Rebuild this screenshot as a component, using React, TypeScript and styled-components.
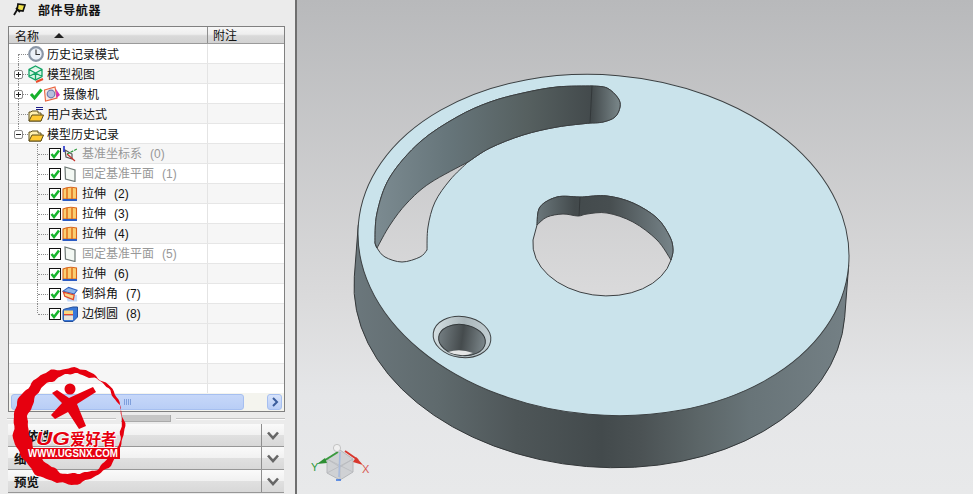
import styled, { createGlobalStyle } from "styled-components";

const GlobalStyle = createGlobalStyle`
  html, body, #root {
    margin: 0;
    height: 100%;
  }
  body {
    overflow: hidden;
    font-family: "Noto Sans CJK SC", "Liberation Sans", sans-serif;
    font-size: 12px;
    color: #111;
  }
`;

const Page = styled.div`
  position: relative;
  display: flex;
  width: 973px;
  height: 494px;
  overflow: hidden;
  background: #ebebeb;
`;

const Sidebar = styled.div`
  flex: none;
  width: 297px;
  box-sizing: border-box;
  padding-left: 8px;
  padding-right: 10px;
  display: flex;
  flex-direction: column;
  border-right: 2px solid #6f6f6f;
  background: #ebebeb;
`;

const TitleBar = styled.div`
  flex: none;
  height: 26px;
  display: flex;
  align-items: flex-start;
  padding: 3px 0 0 5px;
  box-sizing: border-box;
  gap: 12px;
`;

const TitleText = styled.div`
  font-weight: 700;
  font-size: 12px;
  line-height: 14px;
  letter-spacing: 0.6px;
`;

const TreeBox = styled.div`
  flex: none;
  height: 386px;
  box-sizing: border-box;
  border: 1px solid #808080;
  background: #fff;
  display: flex;
  flex-direction: column;
`;

const Header = styled.div`
  flex: none;
  height: 17px;
  display: flex;
  box-sizing: border-box;
  border-bottom: 1px solid #9a9a9a;
  background: linear-gradient(#f7f7f7 0%, #eeeeee 45%, #d9d9d9 55%, #d2d2d2 100%);
`;

const HeadName = styled.div`
  width: 199px;
  box-sizing: border-box;
  padding-left: 6px;
  display: flex;
  align-items: center;
  gap: 15px;
  border-right: 1px solid #8f8f8f;
  line-height: 15px;
`;

const HeadNote = styled.div`
  flex: 1;
  padding-left: 5px;
  line-height: 15px;
`;

const SortArrow = styled.span`
  width: 0;
  height: 0;
  border-left: 5px solid transparent;
  border-right: 5px solid transparent;
  border-bottom: 5px solid #222;
`;

const Rows = styled.div`
  flex: 1;
  min-height: 0;
  overflow: hidden;
`;

const Row = styled.div<{ $shaded: boolean }>`
  height: 20px;
  box-sizing: border-box;
  display: flex;
  border-bottom: 1px solid #e6e6e6;
  background: ${(p) => (p.$shaded ? "#f6f6f6" : "#fff")};
`;

const NameCell = styled.div`
  width: 199px;
  box-sizing: border-box;
  display: flex;
  align-items: center;
  border-right: 1px solid #e4e4e4;
`;

const NoteCell = styled.div`
  flex: 1;
`;

const Lane = styled.span<{ $width: number; $rail: number; $span: "full" | "top" | "bottom" }>`
  position: relative;
  flex: none;
  align-self: stretch;
  width: ${(p) => p.$width}px;

  &::before {
    content: "";
    position: absolute;
    left: ${(p) => p.$rail}px;
    top: ${(p) => (p.$span === "bottom" ? "10px" : "0")};
    bottom: ${(p) => (p.$span === "top" ? "10px" : "-1px")};
    border-left: 1px dotted #8c8c8c;
  }

  &::after {
    content: "";
    position: absolute;
    left: ${(p) => p.$rail + 1}px;
    right: 0;
    top: 10px;
    border-top: 1px dotted #8c8c8c;
  }
`;

const Expander = styled.span`
  position: absolute;
  z-index: 1;
  left: 5px;
  top: 6px;
  width: 7px;
  height: 7px;
  border: 1px solid #8a8a8a;
  border-radius: 2px;
  background: #fff;
  display: flex;
  align-items: center;
  justify-content: center;
`;

const ExpanderMark = styled.span<{ $open: boolean }>`
  position: relative;
  width: 5px;
  height: 1px;
  background: #222;

  &::after {
    content: "";
    display: ${(p) => (p.$open ? "none" : "block")};
    position: absolute;
    left: 2px;
    top: -2px;
    width: 1px;
    height: 5px;
    background: #222;
  }
`;

const CheckBox = styled.span`
  flex: none;
  width: 12px;
  height: 12px;
  margin-left: 1px;
  margin-right: 1px;
  box-sizing: border-box;
  border: 1px solid #111;
  background: #fff;
  display: flex;
`;

const Label = styled.span<{ $muted: boolean; $child: boolean }>`
  margin-left: ${(p) => (p.$child ? 4 : 3)}px;
  color: ${(p) => (p.$muted ? "#989898" : "#111")};
  white-space: nowrap;
  line-height: 16px;
`;

const Order = styled.span`
  margin-left: 8px;
  font-family: "Liberation Sans", sans-serif;
  font-size: 12px;
`;

const Scrollbar = styled.div`
  flex: none;
  height: 18px;
  box-sizing: border-box;
  padding: 1px 2px;
  display: flex;
  background: #f4f4ee;
`;

const ScrollThumb = styled.div`
  width: 233px;
  box-sizing: border-box;
  border: 1px solid #a6bff0;
  border-radius: 3px;
  background: linear-gradient(#c6d7f9, #b9cef6);
  display: flex;
  align-items: center;
  justify-content: center;
  gap: 1px;
`;

const GripBar = styled.span`
  width: 1px;
  height: 6px;
  background: #7f9fdc;
`;

const ScrollButton = styled.div`
  width: 15px;
  margin-left: auto;
  box-sizing: border-box;
  border: 1px solid #a6bff0;
  border-radius: 3px;
  background: linear-gradient(#d7e3fb, #b9cef6);
  display: flex;
  align-items: center;
  justify-content: center;
`;

const Splitter = styled.div`
  flex: none;
  height: 12px;
  margin-left: -1px;
  display: flex;
  align-items: center;
  gap: 5px;
`;

const SplitLine = styled.span<{ $width: number }>`
  width: ${(p) => p.$width}px;
  height: 1px;
  background: #c4c4c4;
  box-shadow: 0 1px 0 #fafafa;
`;

const SplitHandle = styled.span`
  width: 50px;
  height: 6px;
  background: #c6c6c6;
  border: 0 solid #aaa;
  border-width: 0 1px 1px 0;
`;

const Panel = styled.div`
  flex: none;
  width: 276px;
  height: 23px;
  box-sizing: border-box;
  display: flex;
  border-bottom: 1px solid #979797;
  background: linear-gradient(#fafafa 0%, #f1f1f1 50%, #e0e0e0 52%, #d8d8d8 100%);
`;

const PanelTitle = styled.div`
  flex: 1;
  padding-left: 6px;
  font-weight: 700;
  font-size: 12.5px;
  line-height: 24px;
`;

const PanelButton = styled.div`
  width: 22px;
  border-left: 1px solid #8e8e8e;
  display: flex;
  align-items: center;
  justify-content: center;
`;

const Viewport = styled.div`
  flex: 1;
  min-width: 0;
  background: linear-gradient(#b8b9bb 0%, #dadadb 60%, #e5e6e8 80%, #e8e9ea 100%);
`;

const Model = styled.svg`
  display: block;
  width: 100%;
  height: 100%;
`;

const Stamp = styled.svg`
  position: absolute;
  left: 0;
  top: 360px;
  pointer-events: none;
`;

type Pt = [number, number];

// catmull-rom through the traced points
function curve(pts: Pt[], move = true) {
  let d = move ? `M${pts[0][0]} ${pts[0][1]}` : "";
  for (let i = 0; i < pts.length - 1; i++) {
    const a = pts[Math.max(i - 1, 0)];
    const b = pts[i];
    const c = pts[i + 1];
    const e = pts[Math.min(i + 2, pts.length - 1)];
    const c1 = [b[0] + (c[0] - a[0]) / 6, b[1] + (c[1] - a[1]) / 6];
    const c2 = [c[0] - (e[0] - b[0]) / 6, c[1] - (e[1] - b[1]) / 6];
    d += `C${c1[0].toFixed(1)} ${c1[1].toFixed(1)} ${c2[0].toFixed(1)} ${c2[1].toFixed(1)} ${c[0]} ${c[1]}`;
  }
  return d;
}

const slotOuter: Pt[] = [[375, 243], [377, 213], [390, 177], [420, 142], [457, 117], [490, 102], [523, 93], [557, 87], [592, 86]];
const slotCap: Pt[] = [[592, 86], [607, 88], [618, 98], [620, 107], [615, 117], [603, 122], [590, 123]];
const slotInnerA: Pt[] = [[590, 123], [557, 127], [523, 135], [490, 148], [468, 162]];
const slotInnerB: Pt[] = [[468, 162], [450, 180], [435, 202], [428, 227], [427, 250]];
const slotEnd: Pt[] = [[427, 250], [420, 257], [402, 262], [385, 257], [377, 248], [375, 243]];
const slotLower: Pt[] = [[468, 162], [430, 183], [407, 203], [390, 225], [377, 248]];

const slotHole = curve(slotOuter) + curve(slotCap, false) + curve(slotInnerA, false) + curve(slotInnerB, false) + curve(slotEnd, false) + "Z";
const slotWall = curve(slotOuter) + curve(slotCap, false) + curve(slotInnerA, false) + curve(slotLower, false) + "L375 243Z";

const boreTopA: Pt[] = [[537, 225], [540, 207], [557, 197], [578, 197], [583, 197]];
const boreTopB: Pt[] = [[583, 197], [607, 196], [633, 203], [657, 218], [670, 237], [673, 250], [671, 260]];
const boreLower: Pt[] = [[671, 260], [657, 240], [633, 222], [607, 213], [587, 214], [578, 216], [563, 214], [547, 217], [537, 225]];

const boreHole = curve(boreTopA) + curve(boreTopB, false) + "A70 49 5 0 1 533 240L537 225Z";
const boreWall = curve(boreTopA) + curve(boreTopB, false) + curve(boreLower, false) + "Z";

function ragged(cx: number, cy: number, rx: number, ry: number, amp: number, seed: number) {
  const pts: string[] = [];
  for (let i = 0; i < 120; i++) {
    const t = (i / 120) * Math.PI * 2;
    const n = Math.sin(t * 9 + seed) * 0.6 + Math.sin(t * 17 + seed * 2) * 0.5 + Math.sin(t * 31 + seed * 3) * 0.3;
    const k = 1 + (n * amp) / rx;
    pts.push(`${(cx + Math.cos(t) * rx * k).toFixed(1)} ${(cy + Math.sin(t) * ry * k).toFixed(1)}`);
  }
  return `M${pts.join("L")}Z`;
}

function PinIcon() {
  return (
    <svg width="13" height="13" viewBox="0 0 13 13">
      <path d="M5 1 L12 2 L10 8 L4 7Z" fill="#efe04a" stroke="#111" strokeWidth="1.6" />
      <path d="M4 7 L1 12 M3 5 L7 9" stroke="#111" strokeWidth="1.8" />
    </svg>
  );
}

function ClockIcon() {
  return (
    <svg width="16" height="16" viewBox="0 0 16 16">
      <circle cx="8" cy="8" r="6.8" fill="#eaf0f8" stroke="#8a96a6" strokeWidth="2.2" />
      <path d="M8 3.5V8.5H12" fill="none" stroke="#333" strokeWidth="1.1" />
    </svg>
  );
}

function ViewIcon() {
  return (
    <svg width="16" height="18" viewBox="0 0 16 18">
      <path d="M7.5 1 L14 4.5 V11.5 L7.5 15 L1 11.5 V4.5Z M1 4.5 L7.5 8 L14 4.5 M7.5 8V15 M1 11.5 L14 4.5 M1 4.5 L14 11.5" fill="#d8f5e4" stroke="#12a364" strokeWidth="1.3" />
      <path d="M8 17 L15 14" stroke="#ea4b2a" strokeWidth="2" />
    </svg>
  );
}

function TickIcon() {
  return (
    <svg width="16" height="16" viewBox="0 0 16 16">
      <path d="M3 8 L6.5 12 L13.5 3.5" fill="none" stroke="#17b12c" strokeWidth="3" />
    </svg>
  );
}

function CameraIcon() {
  return (
    <svg width="16" height="16" viewBox="0 0 16 16">
      <path d="M0.5 4 L11 1 L13 12 L1.5 15Z" fill="#fbe9e4" stroke="#e8623c" strokeWidth="1.1" />
      <circle cx="7" cy="8" r="3.8" fill="#b6bfdc" stroke="#6d7bb0" strokeWidth="1.2" />
      <path d="M12 3 L16 9 L12.5 12Z" fill="#d92fb0" />
    </svg>
  );
}

function FolderIcon({ lines }: { lines?: boolean }) {
  return (
    <svg width="16" height="16" viewBox="0 0 16 16">
      {lines && <path d="M8 1.5H15 M8 3.5H15" stroke="#1c1c86" strokeWidth="1" />}
      <path d="M1 15 V6 H3 L4 5 H10 V7 H13 V15Z" fill="#fff0b0" stroke="#5c4c18" strokeWidth="1" />
      <path d="M1 15 L4 9 H15.5 L13 15Z" fill="#ffc933" stroke="#5c4c18" strokeWidth="1" />
    </svg>
  );
}

function CsysIcon() {
  return (
    <svg width="16" height="16" viewBox="0 0 16 16">
      <path d="M3 4 L10 8 V13 L4 11Z" fill="#eef0ef" stroke="#555" strokeWidth="1.2" />
      <path d="M2 6V0" stroke="#2030c8" strokeWidth="1.6" />
      <path d="M5 8 L15 3" stroke="#2a9a3a" strokeWidth="1.2" strokeDasharray="3 1" />
      <path d="M5 8 L13 15" stroke="#c8322a" strokeWidth="1.2" />
    </svg>
  );
}

function PlaneIcon() {
  return (
    <svg width="16" height="16" viewBox="0 0 16 16">
      <path d="M3 1 L13 4 V15.5 L3.5 13Z" fill="#f3f8f3" stroke="#6e7874" strokeWidth="1.2" />
    </svg>
  );
}

function ExtrudeIcon() {
  return (
    <svg width="16" height="16" viewBox="0 0 16 16">
      <path d="M1 3 Q7 0 14.5 2 V13 H1Z" fill="#fbcf72" stroke="#d9651c" strokeWidth="1.1" />
      <path d="M5 2V13 M10 2V13" stroke="#e0701c" strokeWidth="1.5" />
      <path d="M0.5 14 H15" stroke="#2c5cc4" strokeWidth="2" />
    </svg>
  );
}

function ChamferIcon() {
  return (
    <svg width="16" height="16" viewBox="0 0 17 16">
      <path d="M3 7 L16 9 V16 H6Z" fill="#c4daf8" />
      <path d="M1 5 L7 1 L16 4 L13 8Z" fill="#8fb7ea" stroke="#2e60c0" strokeWidth="1.1" />
      <path d="M1.5 6 L13 9 L12 14 L3 10.5Z" fill="#fbd78a" stroke="#e0482a" strokeWidth="1.3" />
    </svg>
  );
}

function BlendIcon() {
  return (
    <svg width="16" height="16" viewBox="0 0 16 16">
      <path d="M1 5 Q1 3 3 3 L11 1 H15.5 V11 L11 15.5 H3 Q1 15.5 1 13Z" fill="#3a78d8" stroke="#24509c" strokeWidth="1" />
      <path d="M2 4.5 H11 V8 H2Z" fill="#fbd77e" />
      <path d="M2 8 H11 V9.5 H2Z" fill="#e6482e" />
      <path d="M2 9.5 H11 V14 H2Z" fill="#e8e4d8" />
    </svg>
  );
}

type NodeRow = {
  label: string;
  icon: React.ReactNode;
  order?: number;
  muted?: boolean;
  child?: boolean;
  expander?: "plus" | "minus";
  tick?: boolean;
  span: "full" | "top" | "bottom";
};

const nodes: NodeRow[] = [
  { label: "历史记录模式", icon: <ClockIcon />, span: "bottom" },
  { label: "模型视图", icon: <ViewIcon />, expander: "plus", span: "full" },
  { label: "摄像机", icon: <CameraIcon />, expander: "plus", tick: true, span: "full" },
  { label: "用户表达式", icon: <FolderIcon lines />, span: "full" },
  { label: "模型历史记录", icon: <FolderIcon />, expander: "minus", span: "top" },
  { label: "基准坐标系", icon: <CsysIcon />, order: 0, muted: true, child: true, span: "full" },
  { label: "固定基准平面", icon: <PlaneIcon />, order: 1, muted: true, child: true, span: "full" },
  { label: "拉伸", icon: <ExtrudeIcon />, order: 2, child: true, span: "full" },
  { label: "拉伸", icon: <ExtrudeIcon />, order: 3, child: true, span: "full" },
  { label: "拉伸", icon: <ExtrudeIcon />, order: 4, child: true, span: "full" },
  { label: "固定基准平面", icon: <PlaneIcon />, order: 5, muted: true, child: true, span: "full" },
  { label: "拉伸", icon: <ExtrudeIcon />, order: 6, child: true, span: "full" },
  { label: "倒斜角", icon: <ChamferIcon />, order: 7, child: true, span: "full" },
  { label: "边倒圆", icon: <BlendIcon />, order: 8, child: true, span: "top" },
];

const blankRows = [0, 1, 2, 3];

function Chevron() {
  return (
    <svg width="12" height="9" viewBox="0 0 12 9">
      <path d="M1 1.5 L6 7 L11 1.5" fill="none" stroke="#666" strokeWidth="2.6" />
    </svg>
  );
}

function PartModel() {
  return (
    <Model viewBox="297 0 676 494">
      <defs>
        <linearGradient id="bg" gradientUnits="userSpaceOnUse" x1="0" y1="0" x2="0" y2="494">
          <stop offset="0" stopColor="#b8b9bb" />
          <stop offset="0.6" stopColor="#dadadb" />
          <stop offset="0.8" stopColor="#e5e6e8" />
          <stop offset="1" stopColor="#e8e9ea" />
        </linearGradient>
        <linearGradient id="side" gradientUnits="userSpaceOnUse" x1="354" y1="0" x2="849" y2="0">
          <stop offset="0" stopColor="#6b777c" />
          <stop offset="0.17" stopColor="#5f6a6d" />
          <stop offset="0.33" stopColor="#4e5658" />
          <stop offset="0.5" stopColor="#434a4c" />
          <stop offset="0.58" stopColor="#4b5254" />
          <stop offset="0.7" stopColor="#5c6668" />
          <stop offset="0.8" stopColor="#687478" />
          <stop offset="1" stopColor="#748085" />
        </linearGradient>
        <linearGradient id="slot" gradientUnits="userSpaceOnUse" x1="375" y1="0" x2="620" y2="0">
          <stop offset="0" stopColor="#7c8b91" />
          <stop offset="0.3" stopColor="#66757a" />
          <stop offset="0.62" stopColor="#566060" />
          <stop offset="0.885" stopColor="#434a4c" />
          <stop offset="1" stopColor="#7a878a" />
        </linearGradient>
        <linearGradient id="bore" gradientUnits="userSpaceOnUse" x1="533" y1="0" x2="673" y2="0">
          <stop offset="0" stopColor="#6f7c80" />
          <stop offset="0.3" stopColor="#434a4c" />
          <stop offset="0.55" stopColor="#474e50" />
          <stop offset="1" stopColor="#778489" />
        </linearGradient>
        <linearGradient id="cone" gradientUnits="userSpaceOnUse" x1="433" y1="0" x2="491" y2="0">
          <stop offset="0" stopColor="#d4dfe2" />
          <stop offset="0.5" stopColor="#aab6ba" />
          <stop offset="1" stopColor="#c4d0d4" />
        </linearGradient>
        <linearGradient id="counter" gradientUnits="userSpaceOnUse" x1="438" y1="0" x2="486" y2="0">
          <stop offset="0" stopColor="#747e82" />
          <stop offset="0.5" stopColor="#454b4d" />
          <stop offset="1" stopColor="#7e898d" />
        </linearGradient>
      </defs>

      <path
        d="M358.3 224.8 L354.3 276.8 A246 170 5 0 0 844.7 317.2 L848.7 265.2Z"
        fill="url(#side)"
        stroke="#34383a"
        strokeWidth="1"
      />
      <ellipse cx="603.5" cy="245" rx="246" ry="170" transform="rotate(5 603.5 245)" fill="#cae3eb" stroke="#3c4042" strokeWidth="1" />

      <path d={slotHole} fill="url(#bg)" stroke="#3c4042" strokeWidth="1" />
      <path d={slotWall} fill="url(#slot)" stroke="#3c4042" strokeWidth="1" />
      <path d="M592 86 L590 123" stroke="#33383a" strokeWidth="1" />

      <path d={boreHole} fill="url(#bg)" stroke="#3c4042" strokeWidth="1" />
      <path d={boreWall} fill="url(#bore)" stroke="#3c4042" strokeWidth="1" />
      <path d="M580 197 L579 216" stroke="#33383a" strokeWidth="1" />

      <ellipse cx="462" cy="337" rx="29" ry="20.5" transform="rotate(8 462 337)" fill="url(#cone)" stroke="#3c4042" strokeWidth="1" />
      <ellipse cx="462" cy="340" rx="23.5" ry="15.5" transform="rotate(8 462 340)" fill="url(#counter)" stroke="#33383a" strokeWidth="1" />
      <path d="M448 352 Q460 348 473 353 Q462 358 448 352Z" fill="#e4e6e6" />

      <path d="M340 450 L327 459 V473 L340 480 L353 472 V459Z" fill="#c9cbce" fillOpacity="0.8" stroke="#b6b8bb" strokeWidth="1" />
      <path d="M327 459 L340 467 L353 459 M340 467 V480 M327 473 L353 459 M327 459 L353 472" fill="none" stroke="#b6b8bb" strokeWidth="0.7" />
      <path d="M340 452 L339 477" stroke="#a9bbdc" strokeWidth="1.6" />
      <path d="M336 480 H341" stroke="#2a6ae0" strokeWidth="1.4" />
      <path d="M338 452 L322 462" stroke="#3a9a3e" strokeWidth="2" />
      <path d="M325 458 L317 464 L327 463Z" fill="#2e8f34" />
      <path d="M345 451 L358 460" stroke="#d8382e" strokeWidth="2" />
      <path d="M356 457 L363 465 L353 462Z" fill="#d8382e" />
      <circle cx="337" cy="448" r="3.6" fill="#f0f0f0" stroke="#b9b9b9" strokeWidth="0.8" />
      <text x="311" y="471" fontFamily="Liberation Sans, sans-serif" fontSize="11" fill="#2f9a3c">Y</text>
      <text x="362" y="473" fontFamily="Liberation Sans, sans-serif" fontSize="11" fill="#d85a52">X</text>
    </Model>
  );
}

function App() {
  return (
    <Page>
      <GlobalStyle />
      <Sidebar>
        <TitleBar>
          <PinIcon />
          <TitleText>部件导航器</TitleText>
        </TitleBar>
        <TreeBox>
          <Header>
            <HeadName>
              名称
              <SortArrow />
            </HeadName>
            <HeadNote>附注</HeadNote>
          </Header>
          <Rows>
            {nodes.map((n, i) => (
              <Row key={i} $shaded={i % 2 === 1}>
                <NameCell>
                  <Lane $width={n.child ? 39 : 19} $rail={n.child ? 28 : 9} $span={n.span}>
                    {n.expander && (
                      <Expander>
                        <ExpanderMark $open={n.expander === "minus"} />
                      </Expander>
                    )}
                  </Lane>
                  {n.tick && <TickIcon />}
                  {n.child && (
                    <CheckBox>
                      <svg width="10" height="10" viewBox="0 0 10 10">
                        <path d="M1.5 5 L4 8 L9 1.5" fill="none" stroke="#16b42c" strokeWidth="2.6" />
                      </svg>
                    </CheckBox>
                  )}
                  {n.icon}
                  <Label $muted={!!n.muted} $child={!!n.child}>
                    {n.label}
                    {n.order !== undefined && <Order>({n.order})</Order>}
                  </Label>
                </NameCell>
                <NoteCell />
              </Row>
            ))}
            {blankRows.map((i) => (
              <Row key={i} $shaded={i % 2 === 0}>
                <NameCell />
                <NoteCell />
              </Row>
            ))}
          </Rows>
          <Scrollbar>
            <ScrollThumb>
              <GripBar />
              <GripBar />
              <GripBar />
              <GripBar />
            </ScrollThumb>
            <ScrollButton>
              <svg width="8" height="10" viewBox="0 0 8 10">
                <path d="M2 1 L6 5 L2 9" fill="none" stroke="#3a5c9c" strokeWidth="2" />
              </svg>
            </ScrollButton>
          </Scrollbar>
        </TreeBox>
        <Splitter>
          <SplitLine $width={109} />
          <SplitHandle />
          <SplitLine $width={109} />
        </Splitter>
        <Panel>
          <PanelTitle>相依性</PanelTitle>
          <PanelButton>
            <Chevron />
          </PanelButton>
        </Panel>
        <Panel>
          <PanelTitle>细节</PanelTitle>
          <PanelButton>
            <Chevron />
          </PanelButton>
        </Panel>
        <Panel>
          <PanelTitle>预览</PanelTitle>
          <PanelButton>
            <Chevron />
          </PanelButton>
        </Panel>
      </Sidebar>
      <Viewport>
        <PartModel />
      </Viewport>
      <Stamp width="135" height="134" viewBox="0 360 135 134">
        <path
          d={ragged(68.5, 426, 55.5, 58, 1.4, 1) + ragged(75, 424, 47, 50, 1.4, 4)}
          fill="#e6000f"
          fillRule="evenodd"
        />
        <circle cx="70" cy="389" r="5.5" fill="#e6000f" />
        <path
          d="M52 393 L57 390 L69 398 L93 387 L96 392 L77 404 L86 426 L79 429 L68 412 L55 419 L51 415 L62 403Z"
          fill="#e6000f"
        />
        <rect x="27" y="448" width="93" height="11" fill="#e6000f" />
        <text
          x="36"
          y="445"
          textLength="34"
          lengthAdjust="spacingAndGlyphs"
          fontFamily="Liberation Sans, sans-serif"
          fontSize="18"
          fontWeight="700"
          fontStyle="italic"
          fill="#e6000f"
          stroke="#fff"
          strokeWidth="1.5"
          paintOrder="stroke"
        >
          UG
        </text>
        <text
          x="70"
          y="445"
          fontFamily="Noto Sans CJK SC, sans-serif"
          fontSize="15.5"
          fontWeight="700"
          fill="#e6000f"
          stroke="#fff"
          strokeWidth="1.5"
          paintOrder="stroke"
        >
          爱好者
        </text>
        <text
          x="28"
          y="457"
          textLength="90"
          lengthAdjust="spacingAndGlyphs"
          fontFamily="Liberation Sans, sans-serif"
          fontSize="10"
          fontWeight="700"
          fill="#fff"
        >
          WWW.UGSNX.COM
        </text>
      </Stamp>
    </Page>
  );
}

export default App;
